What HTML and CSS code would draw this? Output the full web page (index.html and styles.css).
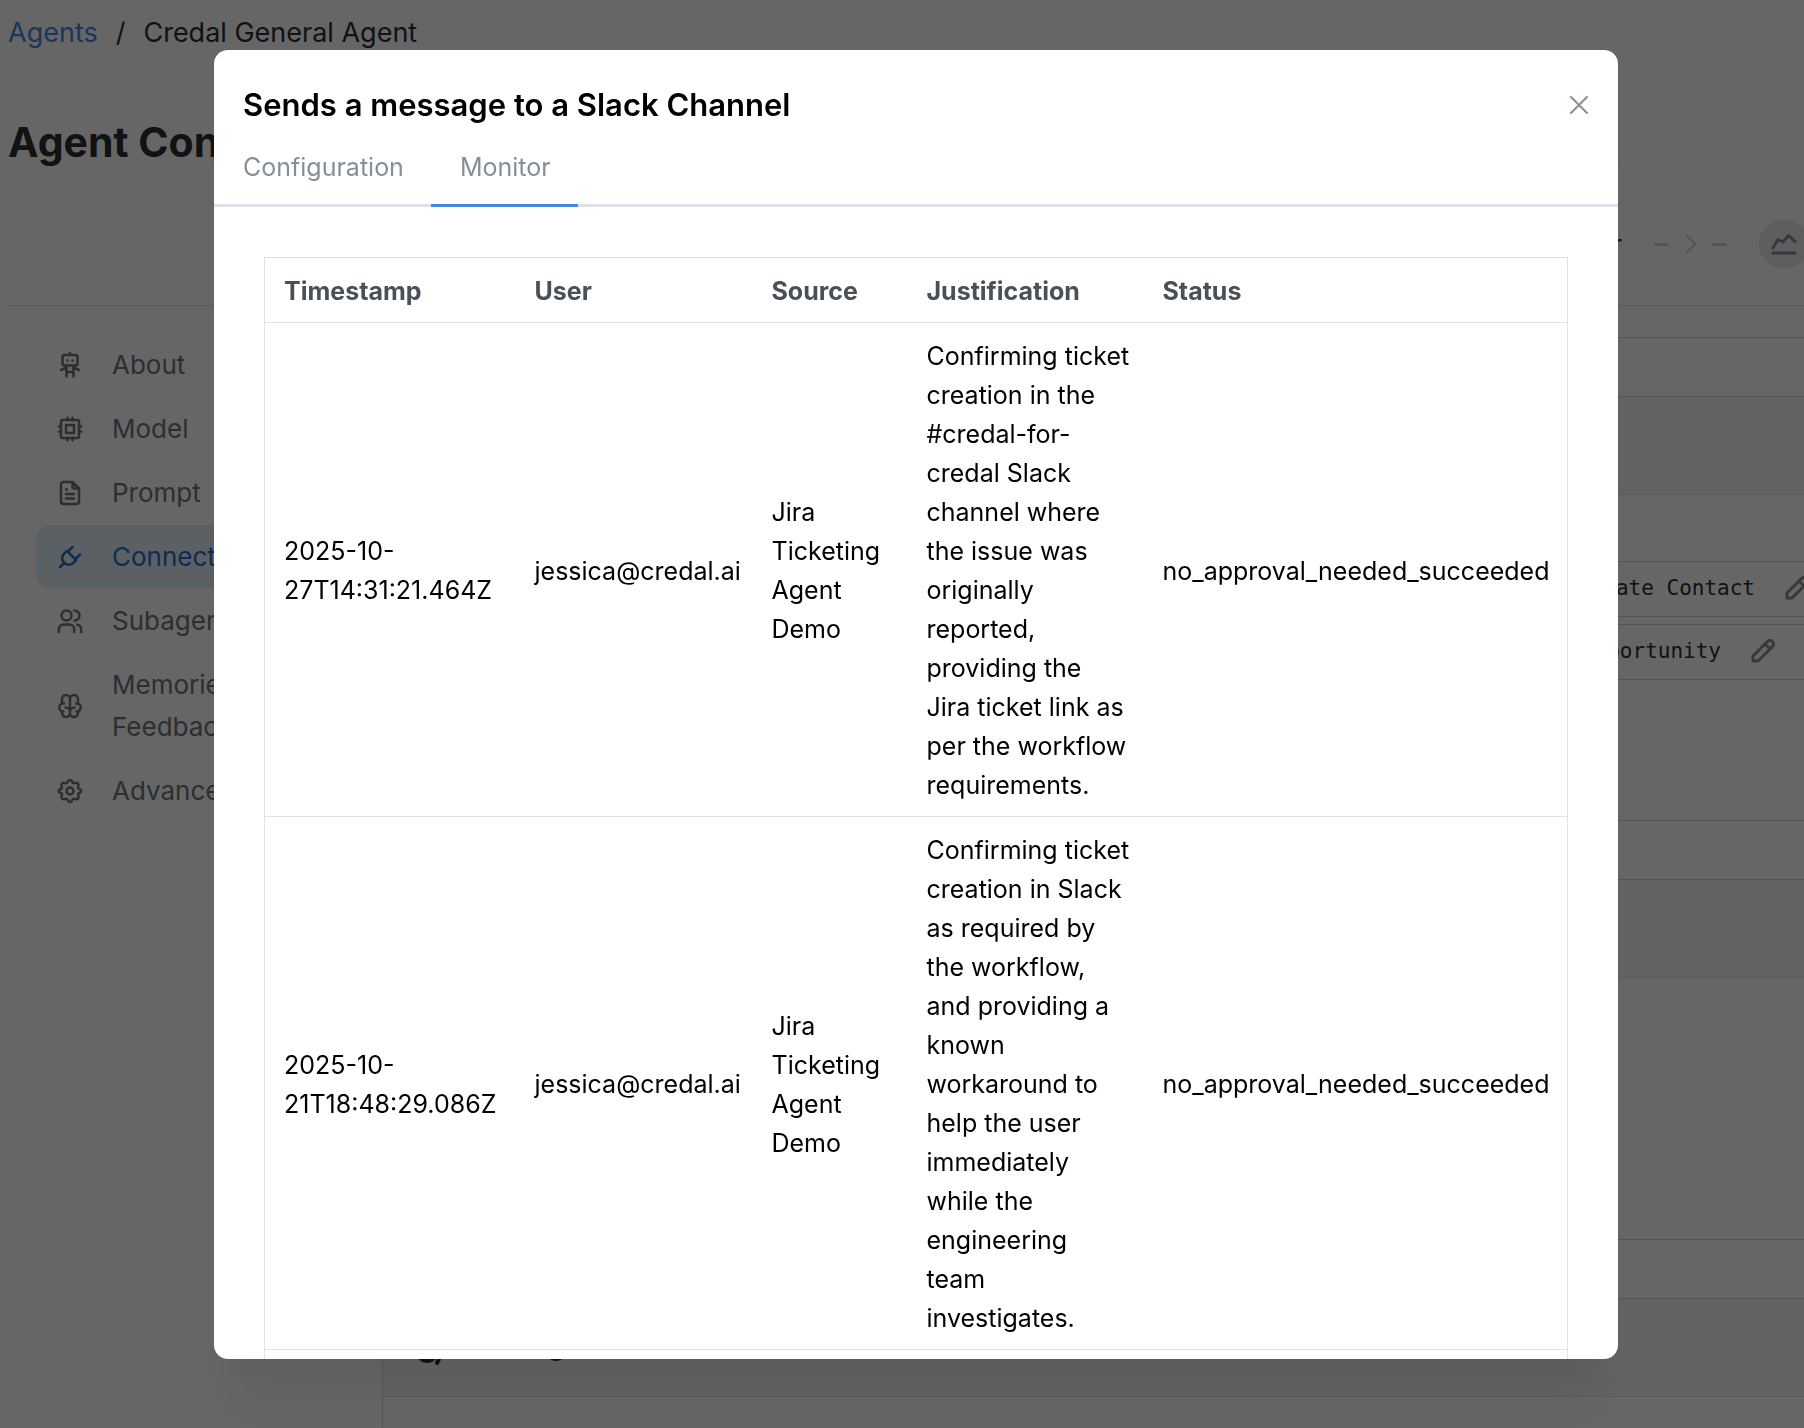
FILE: index.html
```html
<!DOCTYPE html>
<html lang="en">
<head>
<meta charset="utf-8">
<meta name="viewport" content="width=device-width, initial-scale=1">
<title>Credal General Agent</title>
<link rel="stylesheet" href="styles.css">
</head>
<body>
<div class="page">
  <header class="page-header">
    <nav class="breadcrumb" aria-label="Breadcrumb">
      <a href="#agents">Agents</a><span>/</span><span>Credal General Agent</span>
    </nav>
    <h1 class="page-title">Agent Configuration</h1>
    <div class="steps">
      <span class="step-name">Connector</span>
      <span class="dash"></span>
      <svg class="chevron" viewBox="0 0 12 20"><path d="M1.500 1.500 10.500 10 1.500 18.500"/></svg>
      <span class="dash"></span>
      <button class="step-icon" aria-label="Monitor">
        <svg class="icon" viewBox="0 0 24 24"><path d="M1 21h22M1 16 6 7.500l5 2.500 5.500-6.500 6.500 6"/></svg>
      </button>
    </div>
  </header>
  <div class="columns">
    <nav class="sidebar" aria-label="Agent sections">
      <a class="nav-item" href="#about"><svg class="icon" viewBox="0 0 24 24"><path d="M6.500 2h11a2 2 0 0 1 2 2v6.500a2 2 0 0 1-2 2h-11a2 2 0 0 1-2-2V4a2 2 0 0 1 2-2zM12 0v2M8.500 13v10.500M15.500 13v10.500M3 17l5.500-2.500M15.500 14.500 21 17M8.500 19h7M9.500 7.500v.010M14.500 7.500v.010"/></svg>About</a>
      <a class="nav-item" href="#model"><svg class="icon" viewBox="0 0 24 24"><rect x="3" y="3" width="18" height="18" rx="1.500"/><path d="M8 8h8v8H8zM0.800 9.500H3M0.800 14.500H3M21 9.500h2.200M21 14.500h2.200M9.500 .800V3M14.500 .800V3M9.500 21v2.200M14.500 21v2.200"/></svg>Model</a>
      <a class="nav-item" href="#prompt"><svg class="icon" viewBox="0 0 24 24"><path d="M14.500 1v4.500a2 2 0 0 0 2 2H21M18.500 23h-13A2.500 2.500 0 0 1 3 20.500v-17A2.500 2.500 0 0 1 5.500 1h9L21 7.500v13a2.500 2.500 0 0 1-2.500 2.500zM8 8.500h1M8 13h8M8 17.500h8"/></svg>Prompt</a>
      <a class="nav-item active" href="#connectors"><svg class="icon" viewBox="0 0 24 24"><path d="M8.900 5.800 18.200 15.100 15.800 17.500a6.600 6.600 0 1 1-9.300-9.300zM2 22l4.500-4.500M14.500 2 10.500 6M22 9.500l-4 4"/></svg>Connectors</a>
      <a class="nav-item" href="#subagents"><svg class="icon" viewBox="0 0 24 24"><circle cx="8.500" cy="6.500" r="5"/><path d="M.800 23v-2.500a5 5 0 0 1 5-5h5.500a5 5 0 0 1 5 5V23M16.500 1.500a5 5 0 0 1 0 10M23.200 23v-2.500a5 5 0 0 0-4-4.900"/></svg>Subagents</a>
      <a class="nav-item" href="#memories"><svg class="icon" viewBox="0 0 24 24"><path d="M16.500 13.500A4.500 4.500 0 0 0 12 18v1a4 4 0 0 0 8 0v-1.500M7.500 13.500A4.500 4.500 0 0 1 12 18v1a4 4 0 0 1-8 0v-1.500M18.500 17.500a4 4 0 0 0 .500-8h-1M20 9.500V5a4 4 0 0 0-8 0M5.500 17.500a4 4 0 0 1-.500-8h1M4 9.500V5a4 4 0 0 1 8 0v13"/></svg>Memories &amp; Feedback</a>
      <a class="nav-item" href="#advanced"><svg class="icon" viewBox="0 0 24 24"><path d="M9.900 2.700c.5-2.200 3.700-2.200 4.200 0a2.200 2.200 0 0 0 3.200 1.300c1.900-1.100 4.100 1.100 3 3a2.200 2.200 0 0 0 1.300 3.200c2.200.5 2.200 3.100 0 3.600a2.200 2.200 0 0 0-1.300 3.200c1.100 1.900-1.100 4.100-3 3a2.200 2.200 0 0 0-3.200 1.300c-.5 2.200-3.700 2.200-4.200 0a2.200 2.200 0 0 0-3.200-1.300c-1.900 1.100-4.100-1.100-3-3a2.200 2.200 0 0 0-1.300-3.200c-2.200-.5-2.200-3.100 0-3.600a2.200 2.200 0 0 0 1.300-3.200c-1.100-1.900 1.100-4.100 3-3a2.200 2.200 0 0 0 3.200-1.300z"/><circle cx="12" cy="12" r="3.500"/></svg>Advanced</a>
    </nav>
    <main class="content">
      <section class="group">
        <div class="group-head"></div>
        <div class="group-bar"></div>
        <div class="group-body actions">
          <div class="action first"><code>Create Contact</code><svg class="icon pencil" viewBox="0 0 24 24"><path d="M2 22v-5L16.500 2.500a3.500 3.500 0 0 1 5 5L7 22zM14 5l5 5"/></svg></div>
          <div class="action second"><code>Create Opportunity</code><svg class="icon pencil" viewBox="0 0 24 24"><path d="M2 22v-5L16.500 2.500a3.500 3.500 0 0 1 5 5L7 22zM14 5l5 5"/></svg></div>
        </div>
      </section>
      <section class="group">
        <div class="group-head"></div>
        <div class="group-bar"></div>
        <div class="group-body"></div>
      </section>
      <section class="group">
        <div class="group-head"></div>
        <div class="group-bar"><svg class="icon group-icon" viewBox="0 0 30 30"><circle cx="10" cy="19" r="9"/><path d="m22 26-2 4"/></svg><h2>Messages</h2></div>
      </section>
    </main>
  </div>
</div>

<div class="overlay">
  <div class="modal" role="dialog" aria-modal="true" aria-labelledby="modal-title">
    <header class="modal-header">
      <h2 id="modal-title">Sends a message to a Slack Channel</h2>
      <button class="close" aria-label="Close"><svg viewBox="0 0 18 18"><path d="m1 1 16 16M17 1 1 17"/></svg></button>
    </header>
    <div class="tabs" role="tablist">
      <button class="tab" role="tab" aria-selected="false">Configuration</button>
      <button class="tab selected" role="tab" aria-selected="true">Monitor</button>
    </div>
    <div class="modal-body">
      <table class="log">
        <colgroup><col class="c-time"><col class="c-user"><col class="c-source"><col class="c-why"><col></colgroup>
        <thead>
          <tr><th>Timestamp</th><th>User</th><th>Source</th><th>Justification</th><th>Status</th></tr>
        </thead>
        <tbody>
          <tr>
            <td>2025-10-27T14:31:21.464Z</td><td>jessica@credal.ai</td><td>Jira Ticketing Agent Demo</td>
            <td class="why">Confirming ticket creation in the #credal-for-credal Slack channel where the issue was originally reported, providing the Jira ticket link as per the workflow requirements.</td>
            <td>no_approval_needed_succeeded</td>
          </tr>
          <tr>
            <td>2025-10-21T18:48:29.086Z</td><td>jessica@credal.ai</td><td>Jira Ticketing Agent Demo</td>
            <td class="why">Confirming ticket creation in Slack as required by the workflow, and providing a known workaround to help the user immediately while the engineering team investigates.</td>
            <td>no_approval_needed_succeeded</td>
          </tr>
          <tr><td></td><td></td><td></td><td></td><td></td></tr>
        </tbody>
      </table>
    </div>
  </div>
</div>
</body>
</html>
```
FILE: styles.css
```css
* { box-sizing: border-box; }

body {
  margin: 0;
  height: 100vh;
  overflow: hidden;
  background: #fff;
  color: #2c2e33;
  font-family: Inter, "Liberation Sans", sans-serif;
}

h1, h2 { margin: 0; }
button { font: inherit; border: 0; background: none; padding: 0; }
a { text-decoration: none; }

.icon {
  flex: none;
  width: 24px;
  height: 24px;
  overflow: visible;
  fill: none;
  stroke: currentColor;
  stroke-width: 2;
  stroke-linecap: round;
  stroke-linejoin: round;
}

/* Page behind the dialog; it runs a little past the right edge. */
.page {
  height: 100vh;
  margin-right: -30px;
  overflow: hidden;
}

.page-header {
  height: 306px;
  margin-left: 8px;
  border-bottom: 1px solid #dee2e6;
}

.breadcrumb {
  display: flex;
  gap: 18px;
  padding-top: 11px;
  font-size: 27px;
  line-height: 44px;
}
.breadcrumb a { color: #4387e0; }

.page-title {
  padding-top: 57px;
  font-size: 41px;
  line-height: 60px;
}

.steps {
  display: flex;
  align-items: center;
  justify-content: flex-end;
  height: 80px;
  margin-top: 32px;
  padding-right: 25px;
  font-size: 25px;
}
.step-name { margin-right: 32px; }
.dash {
  width: 15px;
  height: 3px;
  border-radius: 2px;
  background: #d0d3da;
}
.chevron {
  width: 12px;
  height: 20px;
  margin: 0 15px 0 16px;
  fill: none;
  stroke: #d0d3da;
  stroke-width: 2;
  stroke-linecap: round;
}
.step-icon {
  display: grid;
  place-items: center;
  width: 50px;
  height: 50px;
  margin-left: 32px;
  border-radius: 50%;
  background: #e7ebef;
  color: #868e96;
}
.step-icon .icon { stroke-width: 3; }

.columns {
  display: flex;
  height: calc(100vh - 306px);
}

.sidebar {
  display: flex;
  flex-direction: column;
  gap: 1px;
  width: 383px;
  padding: 27px 36px 0;
  border-right: 1px solid #ced4da;
}
.nav-item {
  display: flex;
  align-items: center;
  gap: 30px;
  padding: 11px 22px 10px;
  border-radius: 14px;
  color: #6c757d;
  font-size: 26px;
  line-height: 42px;
}
.nav-item.active { background: #e3f0fb; color: #2d69cd; }
.nav-item .icon { stroke-width: 2.5; }

.content { flex: 1; padding-top: 31px; }
.group { border-top: 1px solid #ced4da; }
.group-head { height: 59px; border-bottom: 1px solid #ced4da; }
.group-bar {
  display: flex;
  align-items: center;
  gap: 10px;
  height: 98px;
  padding-left: 34px;
  border-bottom: 1px solid #e0e0e0;
  background: #f8f8f8;
}
.group-bar h2 { padding-bottom: 6px; font-size: 28px; }
.group-icon {
  width: 30px;
  height: 30px;
  stroke-width: 4;
}
.group-body { height: 261px; }

.group-body.actions {
  display: flex;
  flex-direction: column;
  gap: 7px;
  height: 325px;
  padding: 66px 0 0 36px;
}
.action {
  display: flex;
  align-items: center;
  justify-content: flex-end;
  gap: 30px;
  height: 56px;
  padding-bottom: 2px;
  border: 1px solid #ced4da;
}
.action.first { padding-right: 24px; }
.action.second { padding-right: 58px; }
.action code {
  font-family: "DejaVu Sans Mono", monospace;
  font-size: 21px;
}
.pencil { color: #868e96; stroke-width: 3; }

/* Dialog */
.overlay {
  position: fixed;
  inset: 0;
  display: flex;
  padding: 50px 186px 69px 214px;
  background: rgba(0, 0, 0, 0.6);
}
.modal {
  flex: 1;
  min-width: 0;
  overflow: hidden;
  border-radius: 14px;
  background: #fff;
  color: #000;
  box-shadow: 0 65px 50px -13px rgba(0, 0, 0, 0.05), 0 31px 31px -13px rgba(0, 0, 0, 0.04);
}
.modal-header {
  display: flex;
  align-items: center;
  justify-content: space-between;
  padding: 32px 30px 0 29px;
}
.modal-header h2 {
  font-size: 31px;
  font-weight: 600;
  line-height: 46px;
}
.close { width: 18px; height: 18px; }
.close svg {
  display: block;
  fill: none;
  stroke: #868e96;
  stroke-width: 2;
  stroke-linecap: round;
}

.tabs {
  display: flex;
  border-bottom: 3px solid #dee2e6;
}
.tab {
  margin-bottom: -3px;
  padding: 19px 27px 17px 29px;
  border-bottom: 3px solid transparent;
  color: #868e96;
  font-size: 25px;
  line-height: 40px;
}
.tab.selected { border-bottom-color: #4387e0; }

.modal-body { padding: 50px; }
.log {
  width: 100%;
  table-layout: fixed;
  border: 1px solid #dee2e6;
  border-collapse: collapse;
  font-size: 25px;
  line-height: 39px;
}
.log th, .log td {
  height: 64px;
  padding: 14px 0 11px 19px;
  border-bottom: 1px solid #dee2e6;
  text-align: left;
}
.log .why { padding-right: 13px; }
.log th { color: #495057; font-weight: 700; }
.c-time { width: 251px; }
.c-user { width: 237px; }
.c-source { width: 155px; }
.c-why { width: 236px; }
```
